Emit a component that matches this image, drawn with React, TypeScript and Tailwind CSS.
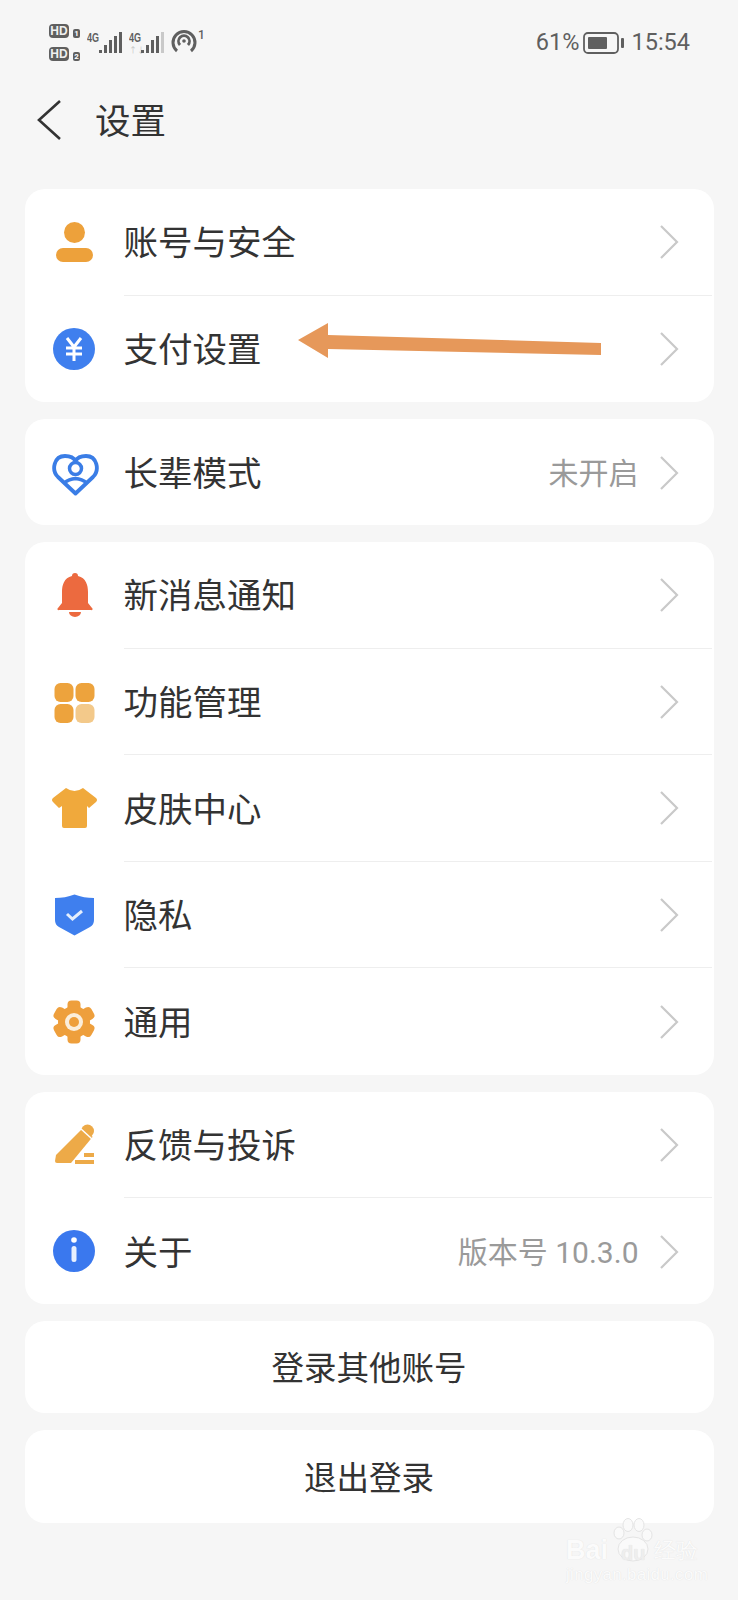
import type { ReactNode } from "react";

const Chevron = () => (
  <svg width="20" height="34" viewBox="0 0 20 34" fill="none" className="shrink-0 mt-[1px]">
    <path d="M2 1l16 16L2 33" stroke="#c9c9c9" strokeWidth="2.2" />
  </svg>
);

const Icon = ({ children }: { children: ReactNode }) => (
  <svg width="50" height="50" viewBox="0 0 50 50" fill="none" className="shrink-0">
    {children}
  </svg>
);

const PersonIcon = () => (
  <Icon>
    <circle cx="25.5" cy="15.5" r="10.5" fill="#eda13b" />
    <rect x="7" y="31" width="37" height="14" rx="7" fill="#eda13b" />
  </Icon>
);

const PayIcon = () => (
  <Icon>
    <circle cx="25" cy="25" r="21" fill="#3f7fee" />
    <path d="M18 14l7 9 7-9M17 24h16M17 30h16M25 23v14" stroke="#fff" strokeWidth="3" />
  </Icon>
);

const HeartIcon = () => (
  <Icon>
    <path
      d="M26.500 46.500L9 30C2 23 5 9 16 9c5 0 9 2 10.500 5C28 11 32 9 37 9c11 0 14 14 7 21z"
      stroke="#3a7de6"
      strokeWidth="3.800"
      strokeLinejoin="round"
    />
    <circle cx="26.500" cy="21.500" r="6" stroke="#3a7de6" strokeWidth="3.500" />
    <path d="M15 36q5-4 11.500-4.500Q33 32 38 36" stroke="#3a7de6" strokeWidth="3.500" />
  </Icon>
);

const BellIcon = () => (
  <Icon>
    <path
      d="M26 3a3 3 0 0 1 3 3c8 2 10 9 10 16v11l4 5a1 1 0 0 1-1 2H10a1 1 0 0 1-1-2l4-5V22c0-7 2-14 10-16a3 3 0 0 1 3-3z"
      fill="#ec6a3f"
    />
    <path d="M20 42h12a6 5 0 0 1-12 0z" fill="#ec6a3f" />
  </Icon>
);

const GridIcon = () => (
  <Icon>
    <rect x="5.500" y="6" width="19" height="19" rx="6" fill="#eda33d" />
    <rect x="26.500" y="6" width="19" height="19" rx="6" fill="#eda33d" />
    <rect x="5.500" y="27" width="19" height="19" rx="6" fill="#eda33d" />
    <rect x="26.500" y="27" width="19" height="19" rx="6" fill="#f3c98a" />
  </Icon>
);

const ShirtIcon = () => (
  <Icon>
    <path
      d="M17 5q8.500 6 17 0l13 10q2 2 0 4l-7 6-2-2v20q0 2-2 2H15q-2 0-2-2V23l-3 2-6-6q-2-2 0-4z"
      fill="#f0a93c"
    />
  </Icon>
);

const ShieldIcon = () => (
  <Icon>
    <path
      d="M25.500 4.500Q35 8 45 8v22q0 5-4 7l-15.500 8.500L10 37q-4-2-4-7V8q10 0 19.500-3.500z"
      fill="#3f7fee"
    />
    <path d="M18 24l5.500 5 9.500-8" stroke="#e4eefc" strokeWidth="3" />
  </Icon>
);

const GearIcon = () => (
  <Icon>
    {[0, 60, 120, 180, 240, 300].map((deg) => (
      <rect key={deg} x="18.500" y="3.500" width="13" height="12" rx="4" fill="#ee9f3c" transform={`rotate(${deg} 25 25)`} />
    ))}
    <circle cx="25" cy="25" r="16" fill="#ee9f3c" />
    <circle cx="25" cy="25" r="9" fill="#fbeedb" />
    <circle cx="25" cy="25" r="5" fill="#ee9f3c" />
  </Icon>
);

const PenIcon = () => (
  <Icon>
    <circle cx="38.500" cy="11" r="6.500" fill="#edaa48" />
    <path d="M7 35L32 10l11.700 6.700L22 43H8q-2 0-2-2z" fill="#edaa48" />
    <path d="M31 8l12 11" stroke="#fff" strokeWidth="1.500" />
    <rect x="35" y="33" width="10" height="4" fill="#edaa48" />
    <rect x="26" y="40" width="19" height="4" fill="#edaa48" />
  </Icon>
);

const InfoIcon = () => (
  <Icon>
    <circle cx="25" cy="25" r="21" fill="#3a78ee" />
    <circle cx="25" cy="14" r="2.800" fill="#fff" />
    <rect x="22.500" y="20" width="5" height="16" rx="2.500" fill="#e8f0fe" />
  </Icon>
);

type Item = { icon: ReactNode; label: string; value?: string };

const Row = ({ item, last }: { item: Item; last: boolean }) => (
  <div className="flex-1 flex items-center pl-[24px]">
    {item.icon}
    <div
      className={`flex-1 h-full ml-[25px] mr-[2px] flex items-center justify-between pr-[33px] ${
        last ? "" : "border-b border-[#eeeeee]"
      }`}
    >
      <span className="pt-[5px] text-[34.500px] text-[#333333]">{item.label}</span>
      <div className="flex items-center gap-[20px]">
        {item.value && <span className="pt-[2px] text-[30px] text-[#9a9a9a]">{item.value}</span>}
        <Chevron />
      </div>
    </div>
  </div>
);

const Card = ({ items, className }: { items: Item[]; className: string }) => (
  <div className={`bg-white rounded-[20px] flex flex-col ${className}`}>
    {items.map((item, i) => (
      <Row key={item.label} item={item} last={i === items.length - 1} />
    ))}
  </div>
);

const Hd = ({ n }: { n: string }) => (
  <div className="flex items-end gap-[4px]">
    <div className="w-[20px] h-[14px] rounded-[4px] bg-[#5f5f5f] text-[#f0f0f0] text-[12px] font-bold leading-[14px] text-center font-['Liberation_Sans',sans-serif]">
      HD
    </div>
    <div className="w-[7px] h-[9px] rounded-[2px] bg-[#5f5f5f] text-white text-[8px] font-bold leading-[9px] text-center">
      {n}
    </div>
  </div>
);

const Signal = ({ roaming }: { roaming?: boolean }) => (
  <div className="flex items-end h-[22px]">
    <div className="w-[12px] h-[21px] flex flex-col justify-between">
      <span className="text-[12px] leading-[11px] font-bold text-[#5f5f5f] font-['Liberation_Sans',sans-serif] scale-x-75 origin-left inline-block">
        4G
      </span>
      {roaming && <span className="text-[8px] leading-[7px] text-[#c4c4c4]">↑↓</span>}
    </div>
    <svg width="23" height="22" viewBox="0 0 23 22">
      <rect x="0" y="18" width="3" height="3" fill="#5f5f5f" />
      <rect x="5" y="13" width="3" height="8" fill="#5f5f5f" />
      <rect x="10" y="8" width="3" height="13" fill="#5f5f5f" />
      <rect x="15" y="4" width="3" height="17" fill="#5f5f5f" />
      <rect x="20" y="0" width="3" height="21" fill={roaming ? "#c9c9c9" : "#5f5f5f"} />
    </svg>
  </div>
);

const StatusBar = () => (
  <div className="h-[84px] pt-[24px] pl-[49px] pr-[48px] flex justify-between items-start text-[#5f5f5f]">
    <div className="flex items-start">
      <div className="flex flex-col gap-[9px]">
        <Hd n="1" />
        <Hd n="2" />
      </div>
      <div className="mt-[8px] ml-[7px] flex gap-[7px]">
        <Signal />
        <Signal roaming />
      </div>
      <svg width="26" height="24" viewBox="0 0 26 24" fill="none" className="mt-[6px] ml-[7px]">
        <path d="M6 21a11 11 0 1 1 14 0" stroke="#5f5f5f" strokeWidth="3" />
        <path d="M9 15a5.500 5.500 0 1 1 8 0" stroke="#5f5f5f" strokeWidth="2.800" />
        <circle cx="13" cy="11" r="1.800" fill="#5f5f5f" />
      </svg>
      <span className="mt-[5px] ml-[1px] text-[12px] leading-[13px] font-medium">1</span>
    </div>
    <div className="flex items-center h-[38px] font-['Roboto',sans-serif] text-[23.500px]">
      <span>61%</span>
      <svg width="41" height="22" viewBox="0 0 41 22" fill="none" className="ml-[4px]">
        <rect x="1" y="1" width="34" height="20" rx="4" stroke="#5f5f5f" strokeWidth="1.800" />
        <rect x="5" y="5" width="19" height="12" rx="1" fill="#5f5f5f" />
        <rect x="38" y="6" width="3" height="10" rx="1" fill="#5f5f5f" />
      </svg>
      <span className="ml-[7px]">15:54</span>
    </div>
  </div>
);

const Watermark = () => (
  <div className="absolute left-[566px] top-[1518px] w-[136px] h-[68px] text-[#fbfbfb] font-['Liberation_Sans',sans-serif] [text-shadow:0_0_1px_#dcdcdc]">
    <svg width="46" height="44" viewBox="0 0 46 44" className="absolute left-[44px] top-0" fill="#fafafa" stroke="#e4e4e4">
      <ellipse cx="9" cy="15" rx="5" ry="6" />
      <ellipse cx="18" cy="7" rx="5" ry="6.500" />
      <ellipse cx="29" cy="7" rx="5" ry="6.500" />
      <ellipse cx="37" cy="17" rx="5" ry="6" />
      <ellipse cx="23" cy="31" rx="15" ry="12" />
    </svg>
    <span className="absolute left-0 top-[18px] text-[27px] leading-[28px] font-bold">Bai</span>
    <span className="absolute left-[55px] top-[24px] text-[20px] leading-[22px] font-bold text-[#eeeeee]">du</span>
    <span className="absolute left-[88px] top-[21px] text-[22px] leading-[24px]">经验</span>
    <span className="absolute left-0 top-[47px] text-[17px] leading-[20px] tracking-[0.3px]">jingyan.baidu.com</span>
  </div>
);

export default function App() {
  return (
    <div className="relative w-[738px] h-[1600px] overflow-hidden bg-[#f6f6f6] font-['Roboto','Noto_Sans_CJK_SC',sans-serif]">
      <StatusBar />

      <div className="h-[72px] pl-[36px] flex items-center">
        <svg width="26" height="40" viewBox="0 0 26 40" fill="none">
          <path d="M24 1L3 20l21 19" stroke="#333333" strokeWidth="2.600" />
        </svg>
        <span className="pt-[5px] ml-[33px] text-[35.500px] text-[#333333]">设置</span>
      </div>

      <div className="mt-[33px] mx-[24.500px] flex flex-col gap-[17px]">
        <Card
          className="h-[213px]"
          items={[
            { icon: <PersonIcon />, label: "账号与安全" },
            { icon: <PayIcon />, label: "支付设置" },
          ]}
        />
        <Card className="h-[106px]" items={[{ icon: <HeartIcon />, label: "长辈模式", value: "未开启" }]} />
        <Card
          className="h-[533px]"
          items={[
            { icon: <BellIcon />, label: "新消息通知" },
            { icon: <GridIcon />, label: "功能管理" },
            { icon: <ShirtIcon />, label: "皮肤中心" },
            { icon: <ShieldIcon />, label: "隐私" },
            { icon: <GearIcon />, label: "通用" },
          ]}
        />
        <Card
          className="h-[212px]"
          items={[
            { icon: <PenIcon />, label: "反馈与投诉" },
            { icon: <InfoIcon />, label: "关于", value: "版本号 10.3.0" },
          ]}
        />
        <div className="h-[92px] pt-[5px] bg-white rounded-[20px] flex items-center justify-center text-[32.500px] text-[#333333]">
          登录其他账号
        </div>
        <div className="h-[93px] pt-[5px] bg-white rounded-[20px] flex items-center justify-center text-[32.500px] text-[#333333]">
          退出登录
        </div>
      </div>

      {/* orange annotation arrow drawn over the screenshot */}
      <svg width="310" height="40" viewBox="0 0 310 40" className="absolute left-[296px] top-[321px]">
        <path d="M2 19L32 2v12l273 8v12L32 28v9z" fill="#e6985a" />
      </svg>

      <Watermark />
    </div>
  );
}
